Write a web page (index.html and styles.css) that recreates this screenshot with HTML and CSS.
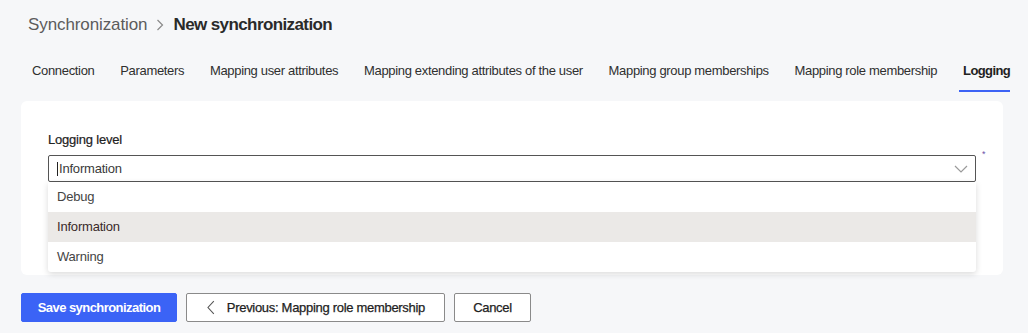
FILE: index.html
```html
<!DOCTYPE html>
<html lang="en">
<head>
<meta charset="utf-8">
<title>New synchronization</title>
<link rel="stylesheet" href="styles.css">
</head>
<body>
<div class="page">
  <div class="breadcrumb">
    <span class="crumb">Synchronization</span>
    <svg class="crumb-sep" width="8" height="12" viewBox="0 0 8 12"><path d="M1.5 1 L6.5 6 L1.5 11" fill="none" stroke="#8a8a8a" stroke-width="1.2"/></svg>
    <span class="crumb-current">New synchronization</span>
  </div>
  <nav class="tabs">
    <span class="tab">Connection</span>
    <span class="tab">Parameters</span>
    <span class="tab">Mapping user attributes</span>
    <span class="tab">Mapping extending attributes of the user</span>
    <span class="tab">Mapping group memberships</span>
    <span class="tab">Mapping role membership</span>
    <span class="tab active">Logging</span>
  </nav>
  <section class="card">
    <div class="field">
      <label class="label">Logging level</label>
      <div class="select-wrap">
        <div class="select">
          <span class="caret"></span><span class="value">Information</span>
          <svg class="chev" width="14" height="8" viewBox="0 0 14 8"><path d="M1 1 L7 7 L13 1" fill="none" stroke="#9a9a9a" stroke-width="1.2"/></svg>
        </div>
        <span class="req">*</span>
        <ul class="menu">
          <li class="opt">Debug</li>
          <li class="opt selected">Information</li>
          <li class="opt">Warning</li>
        </ul>
      </div>
    </div>
  </section>
  <div class="actions">
    <button class="btn primary">Save synchronization</button>
    <button class="btn secondary prev">
      <svg width="8" height="15" viewBox="0 0 8 15"><path d="M7 1 L1 7.5 L7 14" fill="none" stroke="#555" stroke-width="1.1"/></svg>
      <span>Previous: Mapping role membership</span>
    </button>
    <button class="btn secondary cancel">Cancel</button>
  </div>
</div>
</body>
</html>
```
FILE: styles.css
```css
* { box-sizing: border-box; }
html, body { margin: 0; padding: 0; }
body {
  background: #f6f7f9;
  font-family: "Liberation Sans", Arial, sans-serif;
  color: #2a2a2a;
  width: 1028px;
  height: 333px;
  overflow: hidden;
}
.page { padding: 14px 0 0 21px; }
.breadcrumb {
  display: flex;
  align-items: center;
  height: 22px;
  padding-left: 7px;
  font-size: 17px;
  letter-spacing: -0.1px;
}
.crumb { color: #5c5c5c; }
.crumb-sep { margin: 0 9px 0 9px; }
.crumb-current { font-weight: bold; color: #2a2a2a; letter-spacing: -0.6px; }
.tabs {
  display: flex;
  gap: 25.8px;
  padding-left: 11px;
  margin-top: 27px;
  font-size: 13px;
  letter-spacing: -0.33px;
  color: #2f2f2f;
  white-space: nowrap;
}
.tab {
  position: relative;
  height: 29px;
  line-height: 16px;
}
.tab.active { font-weight: bold; color: #222; letter-spacing: -0.6px; }
.tab.active::after {
  content: "";
  position: absolute;
  left: -4px;
  right: 0;
  bottom: 0;
  height: 2px;
  background: #3d63f5;
}
.card {
  margin-top: 9px;
  width: 982px;
  height: 174px;
  background: #fff;
  border-radius: 6px;
  padding: 31px 0 0 27px;
}
.label {
  display: block;
  font-size: 13px;
  letter-spacing: -0.2px;
  color: #222;
  -webkit-text-stroke: 0.2px #222;
  line-height: 16px;
  margin-bottom: 7px;
}
.select-wrap { position: relative; width: 928px; }
.select {
  display: flex;
  align-items: center;
  height: 27px;
  border: 1px solid #555;
  border-radius: 2px;
  padding-left: 8px;
  font-size: 13px;
  letter-spacing: -0.2px;
  color: #3a3a3a;
}
.caret { width: 1px; height: 14px; background: #222; margin-right: 1px; }
.value { flex: 1; }
.chev { margin-right: 7px; }
.req {
  position: absolute;
  left: 934px;
  top: -5px;
  font-size: 9px;
  line-height: 9px;
  color: #6b4fa8;
}
.menu {
  position: absolute;
  left: 0;
  right: 0;
  top: 27px;
  margin: 0;
  padding: 0;
  list-style: none;
  background: #fff;
  box-shadow: 0 2px 6px rgba(0,0,0,0.15);
  border-radius: 0 0 3px 3px;
  z-index: 2;
}
.opt {
  height: 30px;
  line-height: 30px;
  padding-left: 9px;
  font-size: 13px;
  letter-spacing: -0.2px;
  color: #444;
}
.opt.selected { background: #ebe9e7; color: #3a2a2a; }
.actions {
  display: flex;
  gap: 9px;
  margin-top: 18px;
}
.btn {
  height: 29px;
  font-family: "Liberation Sans", Arial, sans-serif;
  font-size: 13px;
  letter-spacing: -0.3px;
  border-radius: 2px;
  padding: 0 19px;
  display: flex;
  align-items: center;
  white-space: nowrap;
  cursor: pointer;
}
.primary {
  background: #3b63f6;
  border: 1px solid #3b63f6;
  color: #fff;
  font-weight: bold;
  letter-spacing: -0.55px;
  width: 156px;
  justify-content: center;
  padding: 0;
}
.secondary {
  background: #fff;
  border: 1px solid #8a8a8a;
  color: #1e1e1e;
  -webkit-text-stroke: 0.25px #1e1e1e;
}
.prev { gap: 12px; padding-left: 20px; width: 259px; }
.cancel { width: 77px; justify-content: center; padding: 0; }
```
